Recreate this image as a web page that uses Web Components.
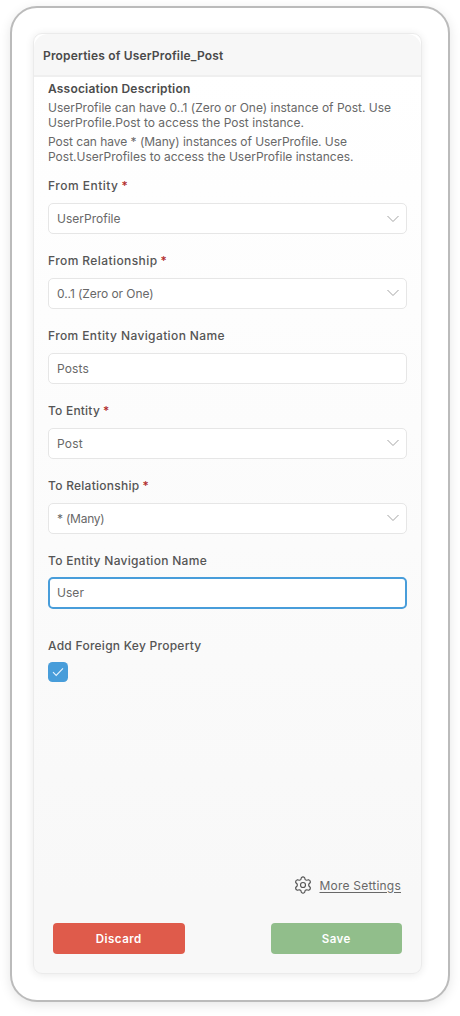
<!DOCTYPE html>
<html lang="en">
<head>
<meta charset="utf-8">
<title>Association properties</title>
<style>
html,body{margin:0;height:100%;background:#fff}
body{font:12px/15px Inter,"Open Sans",sans-serif;color:#686868;overflow:hidden}
</style>
</head>
<body>
<device-frame>
  <properties-panel>
    <fit-text slot="title" width="180.5">Properties of UserProfile_Post</fit-text>
    <association-description></association-description>
    <form-field label="From Entity" label-width="70.5" value="UserProfile" value-width="63.5" required select></form-field>
    <form-field label="From Relationship" label-width="109.5" value="0..1 (Zero or One)" value-width="96.5" required select></form-field>
    <form-field label="From Entity Navigation Name" label-width="177" value="Posts" value-width="32"></form-field>
    <form-field label="To Entity" label-width="52" value="Post" value-width="26" required select></form-field>
    <form-field label="To Relationship" label-width="91.5" value="* (Many)" value-width="47.5" required select></form-field>
    <form-field label="To Entity Navigation Name" label-width="159" value="User" value-width="27" focused></form-field>
    <check-field></check-field>
    <more-settings slot="footer"></more-settings>
    <action-button slot="actions" style="--bg:#df5b4b"><fit-text width="46">Discard</fit-text></action-button>
    <action-button slot="actions" style="--bg:#91be8b"><fit-text width="29">Save</fit-text></action-button>
  </properties-panel>
</device-frame>
<script>
const define = (name, html, setup) => customElements.define(name, class extends HTMLElement {
  connectedCallback() {
    if (this.shadowRoot) return;
    const t = document.createElement('template');
    t.innerHTML = html;
    this.attachShadow({mode: 'open'}).append(t.content.cloneNode(true));
    if (setup) setup(this, this.shadowRoot);
  }
});

// Single line of text tracked out to a given width.
define('fit-text', `<style>:host{display:inline-block;white-space:nowrap}span{display:inline-block;text-decoration:var(--line,none);text-underline-offset:1.5px}</style><span><slot></slot></span>`, (el, root) => {
  const span = root.querySelector('span');
  const fit = () => {
    span.style.letterSpacing = '0px';
    const natural = span.getBoundingClientRect().width;
    if (natural) span.style.letterSpacing = (el.getAttribute('width') - natural) / el.textContent.length + 'px';
  };
  fit();
  requestAnimationFrame(fit);
});

define('device-frame', `<style>
:host{display:block;box-sizing:border-box;width:440px;height:996px;margin:6px 0 0 10px;padding:25px 26px 26px 21px;border:2px solid #bbb;border-radius:27px;background:#fff;box-shadow:0 3px 12px rgba(0,0,0,.1)}
</style><slot></slot>`);

define('properties-panel', `<style>
:host{display:flex;flex-direction:column;box-sizing:border-box;width:389px;height:941px;border:1px solid #ebebeb;border-radius:9px;background:linear-gradient(#fff 40px,#f8f8f8 860px);box-shadow:0 1px 9px rgba(0,0,0,.09)}
header{box-sizing:border-box;height:43px;padding:14px 0 0 9px;border-bottom:2px solid #efefef;border-radius:14px 14px 0 0;background:#f7f7f7;font-weight:600;color:#4a4a4a}
main{flex:1;padding:0 14px}
.actions{display:flex;justify-content:space-between;padding:0 19px 19px}
</style><header><slot name="title"></slot></header><main><slot></slot></main><slot name="footer"></slot><div class="actions"><slot name="actions"></slot></div>`);

define('association-description', `<style>
:host{display:block;box-sizing:border-box;height:101px;padding-top:4px}
h2{margin:0 0 5px;font:600 12px/15px Inter,sans-serif;color:#4c4c4c}
p{margin:0 0 5px;line-height:14.5px}
fit-text{display:block}
</style><h2><fit-text width="142.5">Association Description</fit-text></h2>
<p><fit-text width="343">UserProfile can have 0..1 (Zero or One) instance of Post. Use</fit-text><fit-text width="256">UserProfile.Post to access the Post instance.</fit-text></p>
<p><fit-text width="299">Post can have * (Many) instances of UserProfile. Use</fit-text><fit-text width="305.5">Post.UserProfiles to access the UserProfile instances.</fit-text></p>`);

define('form-field', `<style>
:host{display:block;height:74.9px}
:host([focused]){height:75.4px}
.label{display:flex;gap:3px;height:25px;font-weight:500;color:#555}
:host([focused]) .label{box-sizing:border-box;padding-top:.5px}
.star{color:#b02a2a;font-size:12px}
.box{display:flex;align-items:center;justify-content:space-between;box-sizing:border-box;width:359px;height:31px;padding:0 7px 0 8px;border:1px solid #e6e6e6;border-radius:5px;background:#fff}
:host([focused]) .box{height:32px;border:2px solid #489dda;padding:0 6px 1px 7px}
.box svg{display:none}
:host([select]) .box svg{display:block}
</style><div class="label"></div><div class="box"><svg width="12" height="8" viewBox="0 0 12 8" fill="none" stroke="#a3a3a3"><path d="M.5 1 6 6.5 11.5 1"/></svg></div>`, (el, root) => {
  const text = (value, width) => {
    const t = document.createElement('fit-text');
    t.textContent = value;
    t.setAttribute('width', width);
    return t;
  };
  const label = root.querySelector('.label');
  label.append(text(el.getAttribute('label'), el.getAttribute('label-width')));
  if (el.hasAttribute('required')) {
    const star = document.createElement('span');
    star.className = 'star';
    star.textContent = '*';
    label.append(star);
  }
  root.querySelector('.box').prepend(text(el.getAttribute('value'), el.getAttribute('value-width')));
});

define('check-field', `<style>
:host{display:block;padding-top:10.5px}
.label{height:24px;font-weight:500;color:#555}
.box{display:grid;place-items:center;width:20px;height:20px;border-radius:4.5px;background:#489dda}
</style><div class="label"><fit-text width="153.5">Add Foreign Key Property</fit-text></div><div class="box"><svg width="12" height="10" viewBox="0 0 12 10" fill="none" stroke="#e8f4ff" stroke-width="1.1"><path d="m1 5.2 3.2 3.2L11 1.3"/></svg></div>`);

define('more-settings', `<style>
:host{display:flex;align-items:center;justify-content:flex-end;height:20px;padding-right:20px;margin-bottom:28px;gap:8px}
fit-text{--line:underline}
</style><svg width="18" height="18" viewBox="0 0 18 18" fill="none" stroke="#555" stroke-width="1.15" stroke-linejoin="round"><path d="M7.4 1.6Q9 .2 10.6 1.6L11.2 3.6Q11.8 4.2 12.7 4.2L14.6 3.7Q16.7 4.3 16.3 6.5L14.9 8Q14.5 9 14.9 10L16.3 11.5Q16.7 13.7 14.6 14.3L12.7 13.8Q11.8 13.8 11.2 14.4L10.6 16.4Q9 17.8 7.4 16.4L6.8 14.4Q6.2 13.8 5.3 13.8L3.4 14.3Q1.3 13.7 1.7 11.5L3.1 10Q3.5 9 3.1 8L1.7 6.5Q1.3 4.3 3.4 3.7L5.3 4.2Q6.2 4.2 6.8 3.6Z"/><circle cx="9" cy="9" r="2.5"/></svg><fit-text width="81.5">More Settings</fit-text>`);

define('action-button', `<style>
:host{display:grid;place-items:center;box-sizing:border-box;width:131.5px;height:31px;padding-top:1px;border-radius:4px;background:var(--bg);color:#fff;font-size:11.5px;font-weight:600}
</style><slot></slot>`);
</script>
</body>
</html>
